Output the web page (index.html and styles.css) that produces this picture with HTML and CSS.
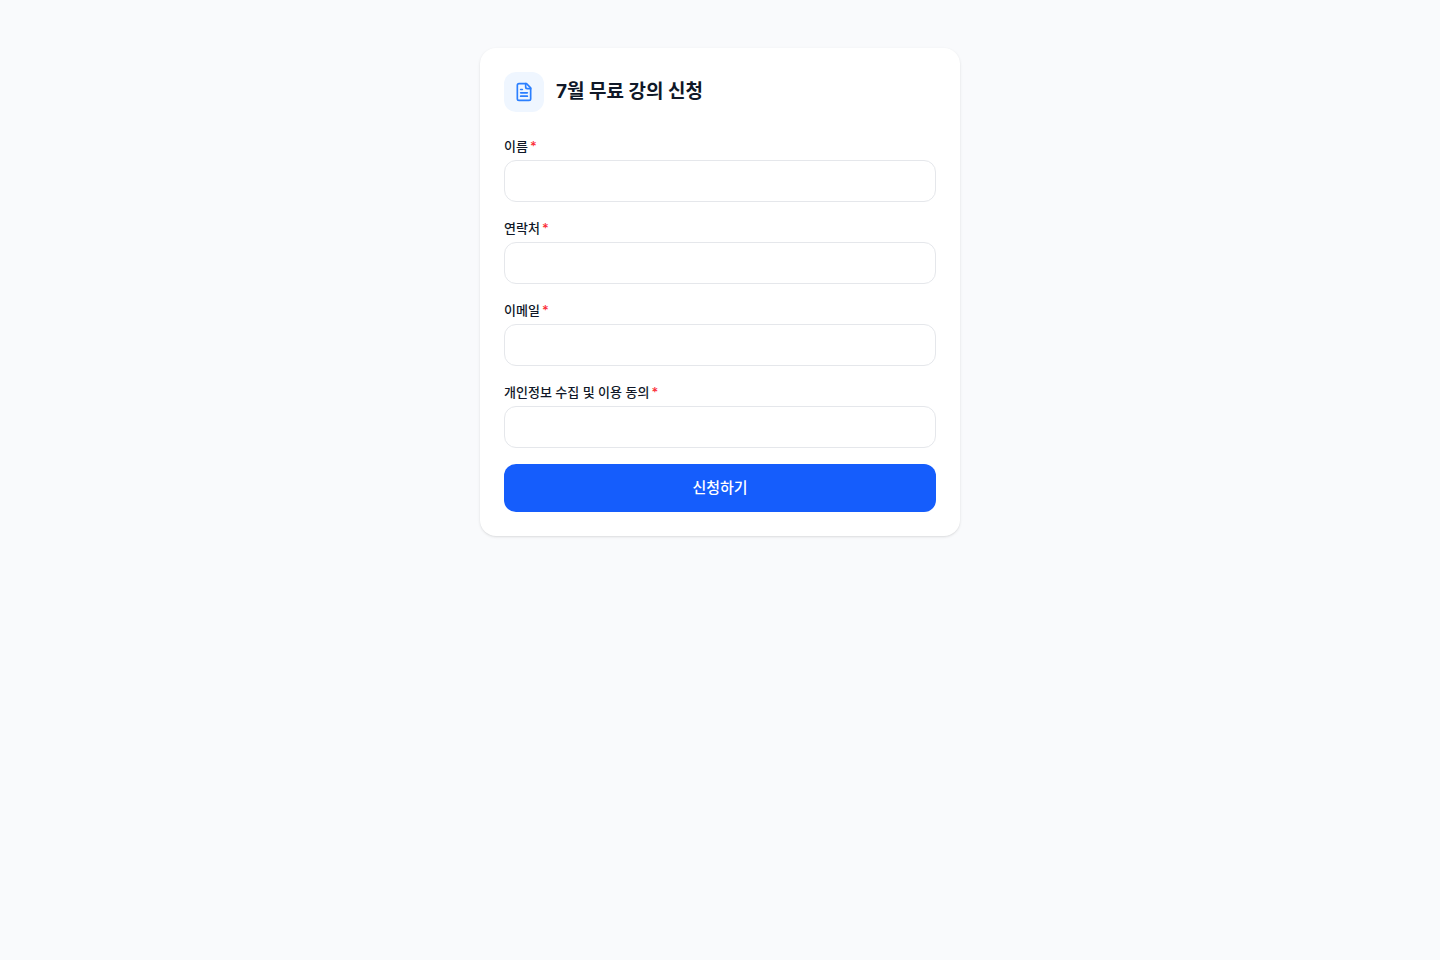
FILE: index.html
```html
<!DOCTYPE html>
<html lang="ko">
<head>
  <meta charset="UTF-8">
  <meta name="viewport" content="width=device-width, initial-scale=1.0">
  <title>7월 무료 강의 신청</title>
  <link rel="stylesheet" href="styles.css">
</head>
<body>
  <main class="page">
    <div class="card">
      <div class="card-header">
        <div class="icon-box">
          <svg width="20" height="20" viewBox="0 0 24 24" fill="none" stroke="currentColor" stroke-width="2" stroke-linecap="round" stroke-linejoin="round" aria-hidden="true">
            <path d="M15 2H6a2 2 0 0 0-2 2v16a2 2 0 0 0 2 2h12a2 2 0 0 0 2-2V7Z"/>
            <path d="M14 2v4a2 2 0 0 0 2 2h4"/>
            <path d="M10 9H8"/>
            <path d="M16 13H8"/>
            <path d="M16 17H8"/>
          </svg>
        </div>
        <h1>7월 무료 강의 신청</h1>
      </div>

      <form class="form">
        <div class="field">
          <label for="name">이름<span class="required">*</span></label>
          <input type="text" id="name" name="name" required>
        </div>
        <div class="field">
          <label for="phone">연락처<span class="required">*</span></label>
          <input type="tel" id="phone" name="phone" required>
        </div>
        <div class="field">
          <label for="email">이메일<span class="required">*</span></label>
          <input type="email" id="email" name="email" required>
        </div>
        <div class="field">
          <label for="agree">개인정보 수집 및 이용 동의<span class="required">*</span></label>
          <input type="text" id="agree" name="agree" required>
        </div>
        <button type="submit">신청하기</button>
      </form>
    </div>
  </main>
</body>
</html>
```
FILE: styles.css
```css
* {
  box-sizing: border-box;
}
body {
  margin: 0;
  font-family: Inter, "Noto Sans CJK KR", sans-serif;
  background: #f9fafc;
  color: #101828;
}
.page {
  padding: 48px 16px;
}
.card {
  max-width: 480px;
  margin: 0 auto;
  padding: 24px;
  background: #fff;
  border-radius: 16px;
  box-shadow: 0 1px 3px rgba(0, 0, 0, 0.1), 0 1px 2px -1px rgba(0, 0, 0, 0.1);
}
.card-header {
  display: flex;
  align-items: center;
  gap: 12px;
  margin-bottom: 24px;
}
.icon-box {
  display: flex;
  align-items: center;
  justify-content: center;
  width: 40px;
  height: 40px;
  color: #2b7fff;
  background: #eff6ff;
  border-radius: 12px;
}
h1 {
  margin: 0;
  font-size: 19px;
  font-weight: 700;
  line-height: 30px;
}
.form {
  display: flex;
  flex-direction: column;
  gap: 16px;
}
.field {
  display: flex;
  flex-direction: column;
  gap: 4px;
}
label {
  font-size: 13px;
  font-weight: 500;
  line-height: 20px;
}
.required {
  margin-left: 2px;
  color: #fb2c36;
}
input {
  width: 100%;
  padding: 10px 16px;
  font: inherit;
  font-size: 13px;
  line-height: 20px;
  color: inherit;
  background: #fff;
  border: 1px solid #e5e7eb;
  border-radius: 12px;
}
input:focus {
  outline: none;
  border-color: #155dfc;
}
button {
  padding: 12px;
  font: inherit;
  font-size: 15px;
  font-weight: 500;
  line-height: 24px;
  color: #fff;
  background: #155dfc;
  border: none;
  border-radius: 12px;
  cursor: pointer;
}
button:hover {
  background: #1447e6;
}
```
